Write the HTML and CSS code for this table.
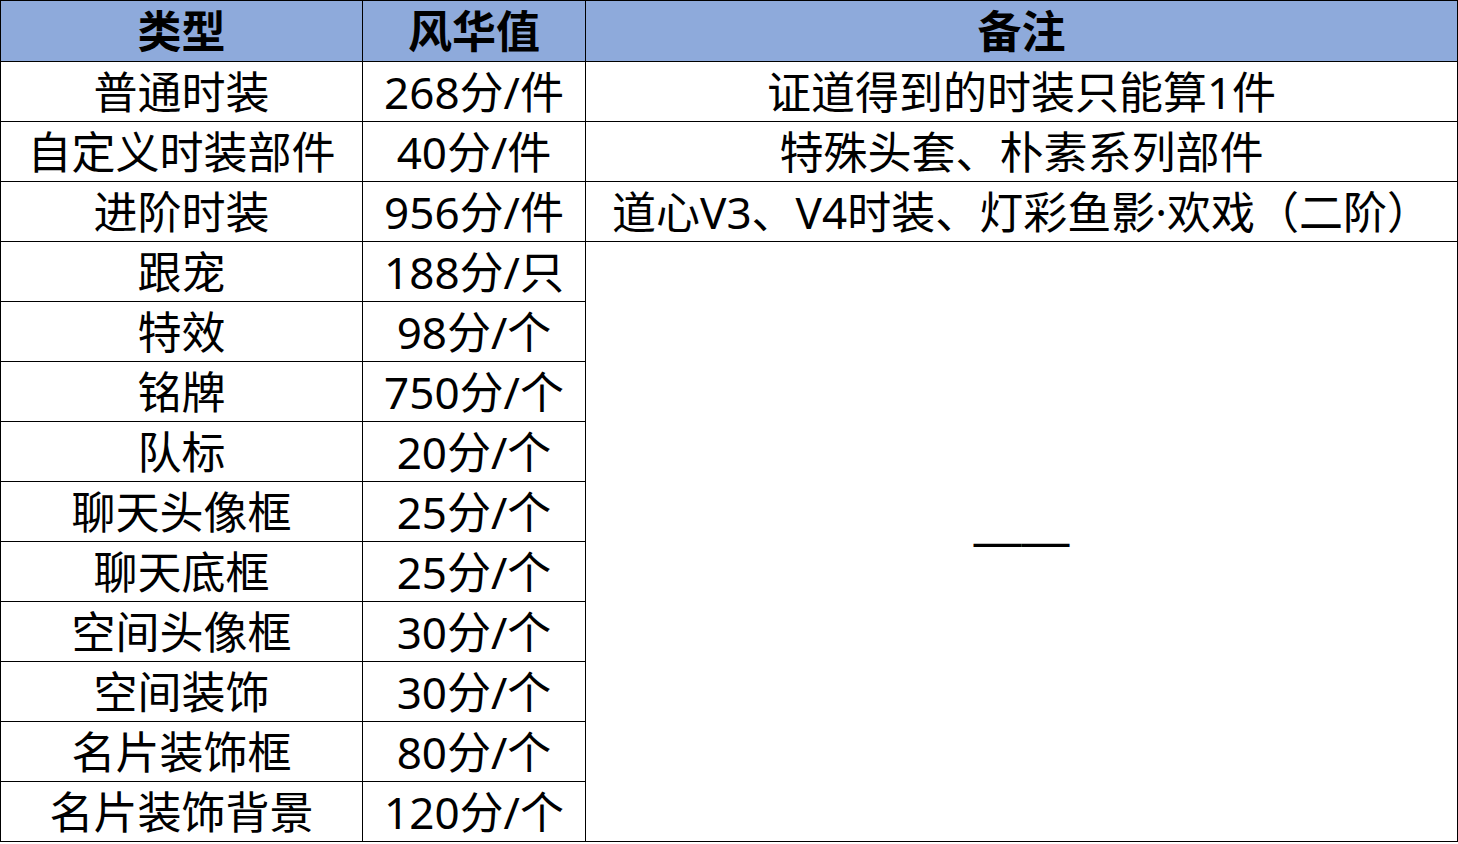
FILE: index.html
```html
<!DOCTYPE html>
<html lang="zh-CN">
<head>
<meta charset="utf-8">
<link rel="stylesheet" href="styles.css">
</head>
<body>
<table class="sheet">
  <colgroup>
    <col class="c1">
    <col class="c2">
    <col class="c3">
  </colgroup>
  <thead>
    <tr><th>类型</th><th>风华值</th><th>备注</th></tr>
  </thead>
  <tbody>
    <tr><td>普通时装</td><td>268分/件</td><td>证道得到的时装只能算1件</td></tr>
    <tr><td>自定义时装部件</td><td>40分/件</td><td>特殊头套、朴素系列部件</td></tr>
    <tr><td>进阶时装</td><td>956分/件</td><td>道心V3、V4时装、灯彩鱼影·欢戏（二阶）</td></tr>
    <tr><td>跟宠</td><td>188分/只</td><td rowspan="10" class="dash">——</td></tr>
    <tr><td>特效</td><td>98分/个</td></tr>
    <tr><td>铭牌</td><td>750分/个</td></tr>
    <tr><td>队标</td><td>20分/个</td></tr>
    <tr><td>聊天头像框</td><td>25分/个</td></tr>
    <tr><td>聊天底框</td><td>25分/个</td></tr>
    <tr><td>空间头像框</td><td>30分/个</td></tr>
    <tr><td>空间装饰</td><td>30分/个</td></tr>
    <tr><td>名片装饰框</td><td>80分/个</td></tr>
    <tr><td>名片装饰背景</td><td>120分/个</td></tr>
  </tbody>
</table>
</body>
</html>
```
FILE: styles.css
```css
html, body {
  margin: 0;
  padding: 0;
  background: #ffffff;
}
.sheet {
  border-collapse: collapse;
  table-layout: fixed;
  width: 1457px;
  font-family: "Noto Sans", "Noto Sans CJK SC", sans-serif;
  font-size: 44px;
  color: #000;
}
.c1 { width: 362px; }
.c2 { width: 223px; }
.c3 { width: 872px; }
.sheet th,
.sheet td {
  border: 1px solid #000;
  padding: 0;
  height: 59px;
  text-align: center;
  vertical-align: middle;
  white-space: nowrap;
  line-height: 1;
}
.sheet th {
  background: #8eaadb;
  font-weight: 700;
  height: 60px;
}
.sheet td.dash {
  font-family: "Liberation Sans", sans-serif;
  font-size: 48px;
}
```
